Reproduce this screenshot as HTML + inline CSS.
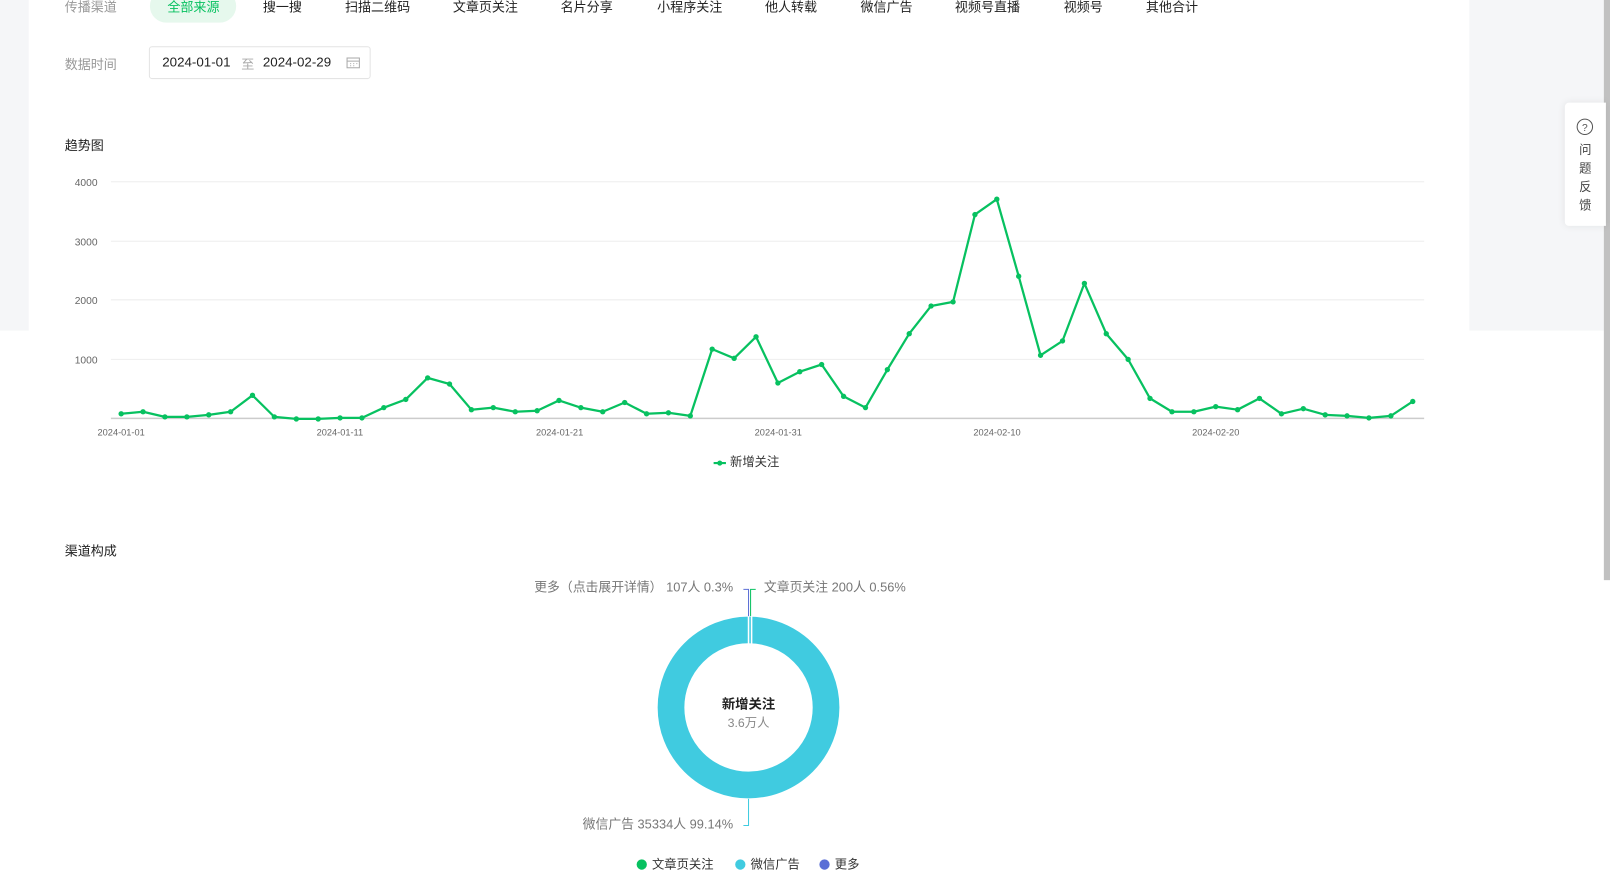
<!DOCTYPE html>
<html><head><meta charset="utf-8">
<style>
html,body{margin:0;padding:0;width:1610px;height:896px;overflow:hidden;background:#fff;}
#w{position:absolute;left:0;top:0;width:1568px;height:873px;transform:scale(1.02679);transform-origin:0 0;font-family:"Liberation Sans","Noto Sans CJK SC",sans-serif;}
.a{position:absolute;white-space:nowrap;}
.tab{position:absolute;top:-4px;font-size:12.7px;color:#222;}
</style></head><body><div id="w">
<div class="a" style="left:0;top:0;width:28px;height:322px;background:#f5f6f8"></div>
<div class="a" style="left:1431px;top:0;width:131px;height:322px;background:#f5f6f8"></div>
<div class="a" style="left:1562px;top:0;width:6px;height:565px;background:#c1c1c1"></div>
<div class="a" style="left:1524px;top:100px;width:40px;height:120px;background:#fff;border-radius:4px 0 0 4px;box-shadow:0 0 8px rgba(0,0,0,.08)"></div>
<svg class="a" style="left:1535px;top:115px" width="17" height="17"><circle cx="8.5" cy="8.5" r="7.5" fill="none" stroke="#555" stroke-width="1"/><text x="8.5" y="12.5" font-size="10" text-anchor="middle" fill="#555" font-family="Liberation Sans">?</text></svg>
<div class="a" style="left:1537px;top:137px;width:14px;font-size:12px;line-height:18px;color:#444;white-space:normal;text-align:center">问题反馈</div>

<div class="a" style="left:63px;top:-4px;font-size:12.7px;color:#999">传播渠道</div>
<div class="a" style="left:146px;top:-10px;width:84px;height:32px;border-radius:16px;background:#e6f8ed"></div>
<div class="tab" style="left:163px;color:#07c160">全部来源</div>
<div class="tab" style="left:256px">搜一搜</div>
<div class="tab" style="left:336px">扫描二维码</div>
<div class="tab" style="left:441px">文章页关注</div>
<div class="tab" style="left:546px">名片分享</div>
<div class="tab" style="left:640px">小程序关注</div>
<div class="tab" style="left:745px">他人转载</div>
<div class="tab" style="left:838px">微信广告</div>
<div class="tab" style="left:930px">视频号直播</div>
<div class="tab" style="left:1036px">视频号</div>
<div class="tab" style="left:1116px">其他合计</div>

<div class="a" style="left:63px;top:52px;font-size:12.7px;color:#999">数据时间</div>
<div class="a" style="left:145px;top:45px;width:214px;height:30px;border:1px solid #e4e4e4;border-radius:3px"></div>
<div class="a" style="left:158px;top:53px;font-size:13px;color:#222">2024-01-01</div>
<div class="a" style="left:235px;top:52px;font-size:12.7px;color:#aaa">至</div>
<div class="a" style="left:256px;top:53px;font-size:13px;color:#222">2024-02-29</div>
<svg class="a" style="left:337px;top:55px" width="14" height="12"><rect x="1" y="1.5" width="12" height="9.5" fill="none" stroke="#aaa"/><line x1="1" y1="4.5" x2="13" y2="4.5" stroke="#aaa"/><path d="M4 7h1M7 7h1M10 7h1M4 9h1M7 9h1" stroke="#aaa"/></svg>

<div class="a" style="left:63px;top:131px;font-size:12.7px;color:#222">趋势图</div>
<svg class="a" style="left:0;top:0" width="1431" height="470" font-family="Liberation Sans">
<g stroke="#eee" stroke-width="1">
<line x1="108" y1="177" x2="1387" y2="177"/><line x1="108" y1="235" x2="1387" y2="235"/><line x1="108" y1="292" x2="1387" y2="292"/><line x1="108" y1="350" x2="1387" y2="350"/></g>
<line x1="108" y1="407.5" x2="1387" y2="407.5" stroke="#ccc" stroke-width="1.5"/>
<g font-size="10" fill="#666" text-anchor="end"><text x="95" y="181">4000</text><text x="95" y="239">3000</text><text x="95" y="296">2000</text><text x="95" y="354">1000</text></g>
<g font-size="9" fill="#666" text-anchor="middle"><text x="118" y="424">2024-01-01</text><text x="331" y="424">2024-01-11</text><text x="545" y="424">2024-01-21</text><text x="758" y="424">2024-01-31</text><text x="971" y="424">2024-02-10</text><text x="1184" y="424">2024-02-20</text></g>
<polyline id="pl" fill="none" stroke="#07c160" stroke-width="2.2" stroke-linejoin="round"/>
<g id="dots" fill="#07c160"></g>
<line x1="695" y1="451" x2="707" y2="451" stroke="#07c160" stroke-width="2"/><circle cx="701" cy="451" r="2.5" fill="#07c160"/>
<text x="711" y="454" font-size="12" fill="#333" font-family="Liberation Sans,Noto Sans CJK SC">新增关注</text>
</svg>
<script>
var ys=[403,401,406,406,404,401,385,406,408,408,407,407,397,389,368,374,399,397,401,400,390,397,401,392,403,402,405,340,349,328,373,362,355,386,397,360,325,298,294,209,194,269,346,332,276,325,350,388,401,401,396,399,388,403,398,404,405,407,405,391];
var p=[],d="";for(var i=0;i<ys.length;i++){var x=118+i*21.32;p.push(x.toFixed(1)+","+ys[i]);d+='<circle cx="'+x.toFixed(1)+'" cy="'+ys[i]+'" r="2.6"/>';}
document.getElementById("pl").setAttribute("points",p.join(" "));document.getElementById("dots").innerHTML=d;
</script>

<div class="a" style="left:63px;top:526px;font-size:12.7px;color:#222">渠道构成</div>
<svg class="a" style="left:0;top:540px" width="1431" height="333" font-family="Liberation Sans,Noto Sans CJK SC">
<circle cx="729" cy="149" r="75.5" fill="none" stroke="#40cbe0" stroke-width="26"/>
<line x1="729" y1="60" x2="729" y2="87" stroke="#fff" stroke-width="1.5"/>
<line x1="732" y1="60" x2="732" y2="87" stroke="#fff" stroke-width="1.5"/>
<polyline points="724,34 729,34 729,60" fill="none" stroke="#5b6fd6" stroke-width="1"/>
<polyline points="736,34 731,34 731,60" fill="none" stroke="#07c160" stroke-width="1"/>
<polyline points="729,238 729,264 724,264" fill="none" stroke="#40cbe0" stroke-width="1"/>
<text x="714" y="36" font-size="12.5" fill="#777" text-anchor="end">更多（点击展开详情） 107人 0.3%</text>
<text x="744" y="36" font-size="12.5" fill="#777">文章页关注 200人 0.56%</text>
<text x="714" y="267" font-size="12.5" fill="#777" text-anchor="end">微信广告 35334人 99.14%</text>
<text x="729" y="150" font-size="13" fill="#222" font-weight="bold" text-anchor="middle">新增关注</text>
<text x="729" y="168" font-size="12" fill="#888" text-anchor="middle">3.6万人</text>
<circle cx="625" cy="302" r="5" fill="#07c160"/><text x="635" y="306" font-size="12" fill="#333">文章页关注</text>
<circle cx="721" cy="302" r="5" fill="#40cbe0"/><text x="731" y="306" font-size="12" fill="#333">微信广告</text>
<circle cx="803" cy="302" r="5" fill="#5b6fd6"/><text x="813" y="306" font-size="12" fill="#333">更多</text>
</svg>
</div></body></html>
